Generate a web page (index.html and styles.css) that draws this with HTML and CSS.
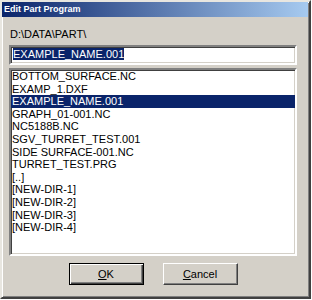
FILE: index.html
```html
<!DOCTYPE html>
<html lang="en">
<head>
  <meta charset="UTF-8">
  <title>Edit Part Program</title>
  <link rel="stylesheet" href="styles.css">
</head>
<body>

  <div class="dialog">
    <div class="titlebar">Edit Part Program</div>

    <div class="content">
      <div class="path">D:\DATA\PART\</div>

      <div class="field">
        <span class="selected-text">EXAMPLE_NAME.001</span>
      </div>

      <ul class="filelist">
        <li>BOTTOM_SURFACE.NC</li>
        <li>EXAMP_1.DXF</li>
        <li class="selected">EXAMPLE_NAME.001</li>
        <li>GRAPH_01-001.NC</li>
        <li>NC5188B.NC</li>
        <li>SGV_TURRET_TEST.001</li>
        <li>SIDE SURFACE-001.NC</li>
        <li>TURRET_TEST.PRG</li>
        <li>[..]</li>
        <li>[NEW-DIR-1]</li>
        <li>[NEW-DIR-2]</li>
        <li>[NEW-DIR-3]</li>
        <li>[NEW-DIR-4]</li>
      </ul>

      <div class="buttons">
        <button type="button" class="btn default"><u>O</u>K</button>
        <button type="button" class="btn"><u>C</u>ancel</button>
      </div>
    </div>
  </div>

</body>
</html>
```

FILE: styles.css
```css
body {
  margin: 0;
  background: #fff;
  font-family: "Liberation Sans", Arial, sans-serif;
  font-size: 11px;
  color: #000;
}

.dialog {
  width: 311px;
  height: 299px;
  box-sizing: border-box;
  background: #d4d0c8;
  border: 2px solid;
  border-color: #e8e6e0 #404040 #404040 #e8e6e0;
  box-shadow: inset 1px 1px #fff, inset -1px -1px #808080;
}

.titlebar {
  height: 15px;
  line-height: 15px;
  margin-right: 1px;
  padding-left: 2px;
  font-size: 9px;
  font-weight: bold;
  color: #fff;
  background: linear-gradient(to right, #0a246a, #a6caf0);
}

.content {
  padding: 11px 0 0 7px;
}

.path {
  line-height: 13px;
  padding-left: 1px;
}

.field,
.filelist {
  width: 288px;
  box-sizing: border-box;
  background: #fff;
  border: 2px solid;
  border-color: #808080 #fff #fff #808080;
  box-shadow: inset 1px 1px #404040, inset -1px -1px #d4d0c8;
}

.field {
  height: 20px;
  margin-top: 4px;
  padding: 1px 2px;
}

.selected-text {
  display: inline-block;
  line-height: 12px;
  background: #0a246a;
  color: #fff;
}

.filelist {
  list-style: none;
  height: 188px;
  margin: 3px 0 0;
  padding: 0;
}

.filelist li {
  line-height: 12.6px;
  padding-left: 1px;
  white-space: nowrap;
}

.filelist li.selected {
  background: #0a246a;
  color: #fff;
}

.buttons {
  width: 288px;
  display: flex;
  justify-content: center;
  gap: 19px;
  margin-top: 7px;
}

.btn {
  width: 75px;
  height: 22px;
  padding: 0;
  font-family: inherit;
  font-size: 11px;
  color: #000;
  background: #d4d0c8;
  border: 1px solid;
  border-color: #fff #404040 #404040 #fff;
  box-shadow: inset -1px -1px #808080;
}

.btn.default {
  border: 1px solid #000;
  box-shadow: inset 1px 1px #fff, inset -1px -1px #404040, inset -2px -2px #808080;
}
```
